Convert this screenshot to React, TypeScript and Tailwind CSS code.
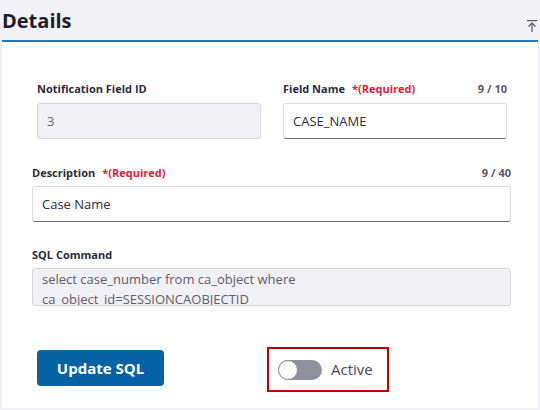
import { useState } from "react";

const font = { fontFamily: '"Open Sans", "Noto Sans", Arial, sans-serif' };

function FieldLabel({
  text,
  required,
  counter,
}: {
  text: string;
  required?: boolean;
  counter?: string;
}) {
  return (
    <div className="flex items-center justify-between h-4 text-[11px] leading-4 font-bold">
      <span className="text-[#2b2b3b]">
        {text}
        {required && <span className="ml-[7px] text-[#dc1f3c]">*(Required)</span>}
      </span>
      {counter && <span className="text-[#5a5a66]">{counter}</span>}
    </div>
  );
}

export default function App() {
  const [active, setActive] = useState(false);

  return (
    <div
      className="w-[540px] h-[410px] bg-[#f1f1f6] flex flex-col overflow-hidden"
      style={font}
    >
      {/* header */}
      <div className="h-[40px] flex items-start justify-between pl-[2px] pr-[3px] pt-[7px]">
        <h1 className="text-[20px] leading-[28px] font-bold text-[#1d1d2c]">Details</h1>
        <svg
          width="10"
          height="12"
          viewBox="0 0 10 12"
          className="mt-[13px]"
          fill="none"
          stroke="#55555f"
          strokeWidth="1.2"
        >
          <line x1="0" y1="0.6" x2="10" y2="0.6" />
          <line x1="5" y1="3" x2="5" y2="12" />
          <polyline points="1.5,6.5 5,3 8.5,6.5" />
        </svg>
      </div>

      {/* panel */}
      <div className="mx-[2px] h-[368px] bg-white border-t-2 border-[#1b79bd] pl-[30px] pr-[27px] pt-[39px]">
        <div className="grid grid-cols-2 gap-x-[22px] pl-[5px] pr-[4px]">
          <div>
            <FieldLabel text="Notification Field ID" />
            <input
              readOnly
              value="3"
              className="mt-[6px] w-full h-[36px] rounded-[3px] border border-[#d6d6dd] bg-[#f0f0f5] px-[9px] text-[13px] text-[#66666f] outline-none"
            />
          </div>
          <div>
            <FieldLabel text="Field Name" required counter="9 / 10" />
            <input
              readOnly
              value="CASE_NAME"
              className="mt-[6px] w-full h-[36px] rounded-[3px] border border-[#dcdce2] border-b-[#6e6e78] bg-white px-[9px] text-[13px] text-[#2e2e3a] outline-none"
            />
          </div>
        </div>

        <div className="mt-[26px]">
          <FieldLabel text="Description" required counter="9 / 40" />
          <input
            readOnly
            value="Case Name"
            className="mt-[5px] w-full h-[36px] rounded-[3px] border border-[#dcdce2] border-b-[#6e6e78] bg-white px-[9px] text-[13px] text-[#2e2e3a] outline-none"
          />
        </div>

        <div className="mt-[25px]">
          <FieldLabel text="SQL Command" />
          <textarea
            readOnly
            value={"select case_number from ca_object where\nca_object_id=SESSIONCAOBJECTID"}
            className="mt-[5px] block w-full h-[38px] resize-none overflow-hidden rounded-[3px] border border-[#d6d6dd] bg-[#f0f0f5] pl-[9px] pt-0 text-[13px] leading-[20px] text-[#5e5e68] outline-none"
          />
        </div>

        <div className="mt-[41px] pl-[5px] flex items-start">
          <button className="mt-[3px] w-[127px] h-[36px] rounded-[4px] bg-[#0562a4] text-white text-[15px] font-bold">
            Update SQL
          </button>
          <div className="ml-[103px] w-[122px] h-[45px] border-2 border-[#c00000] flex items-center pl-[9px] gap-[9px]">
            <button
              onClick={() => setActive(!active)}
              className={
                active
                  ? "relative w-[44px] h-[20px] rounded-full bg-[#0562a4]"
                  : "relative w-[44px] h-[20px] rounded-full bg-[#8f909c]"
              }
            >
              <span
                className={
                  active
                    ? "absolute top-0 right-0 w-[20px] h-[20px] rounded-full bg-white border-[1.5px] border-[#0562a4]"
                    : "absolute top-0 left-0 w-[20px] h-[20px] rounded-full bg-white border-[1.5px] border-[#8f909c]"
                }
              />
            </button>
            <span className="text-[15px] text-[#4a4a5a]">Active</span>
          </div>
        </div>
      </div>
    </div>
  );
}
